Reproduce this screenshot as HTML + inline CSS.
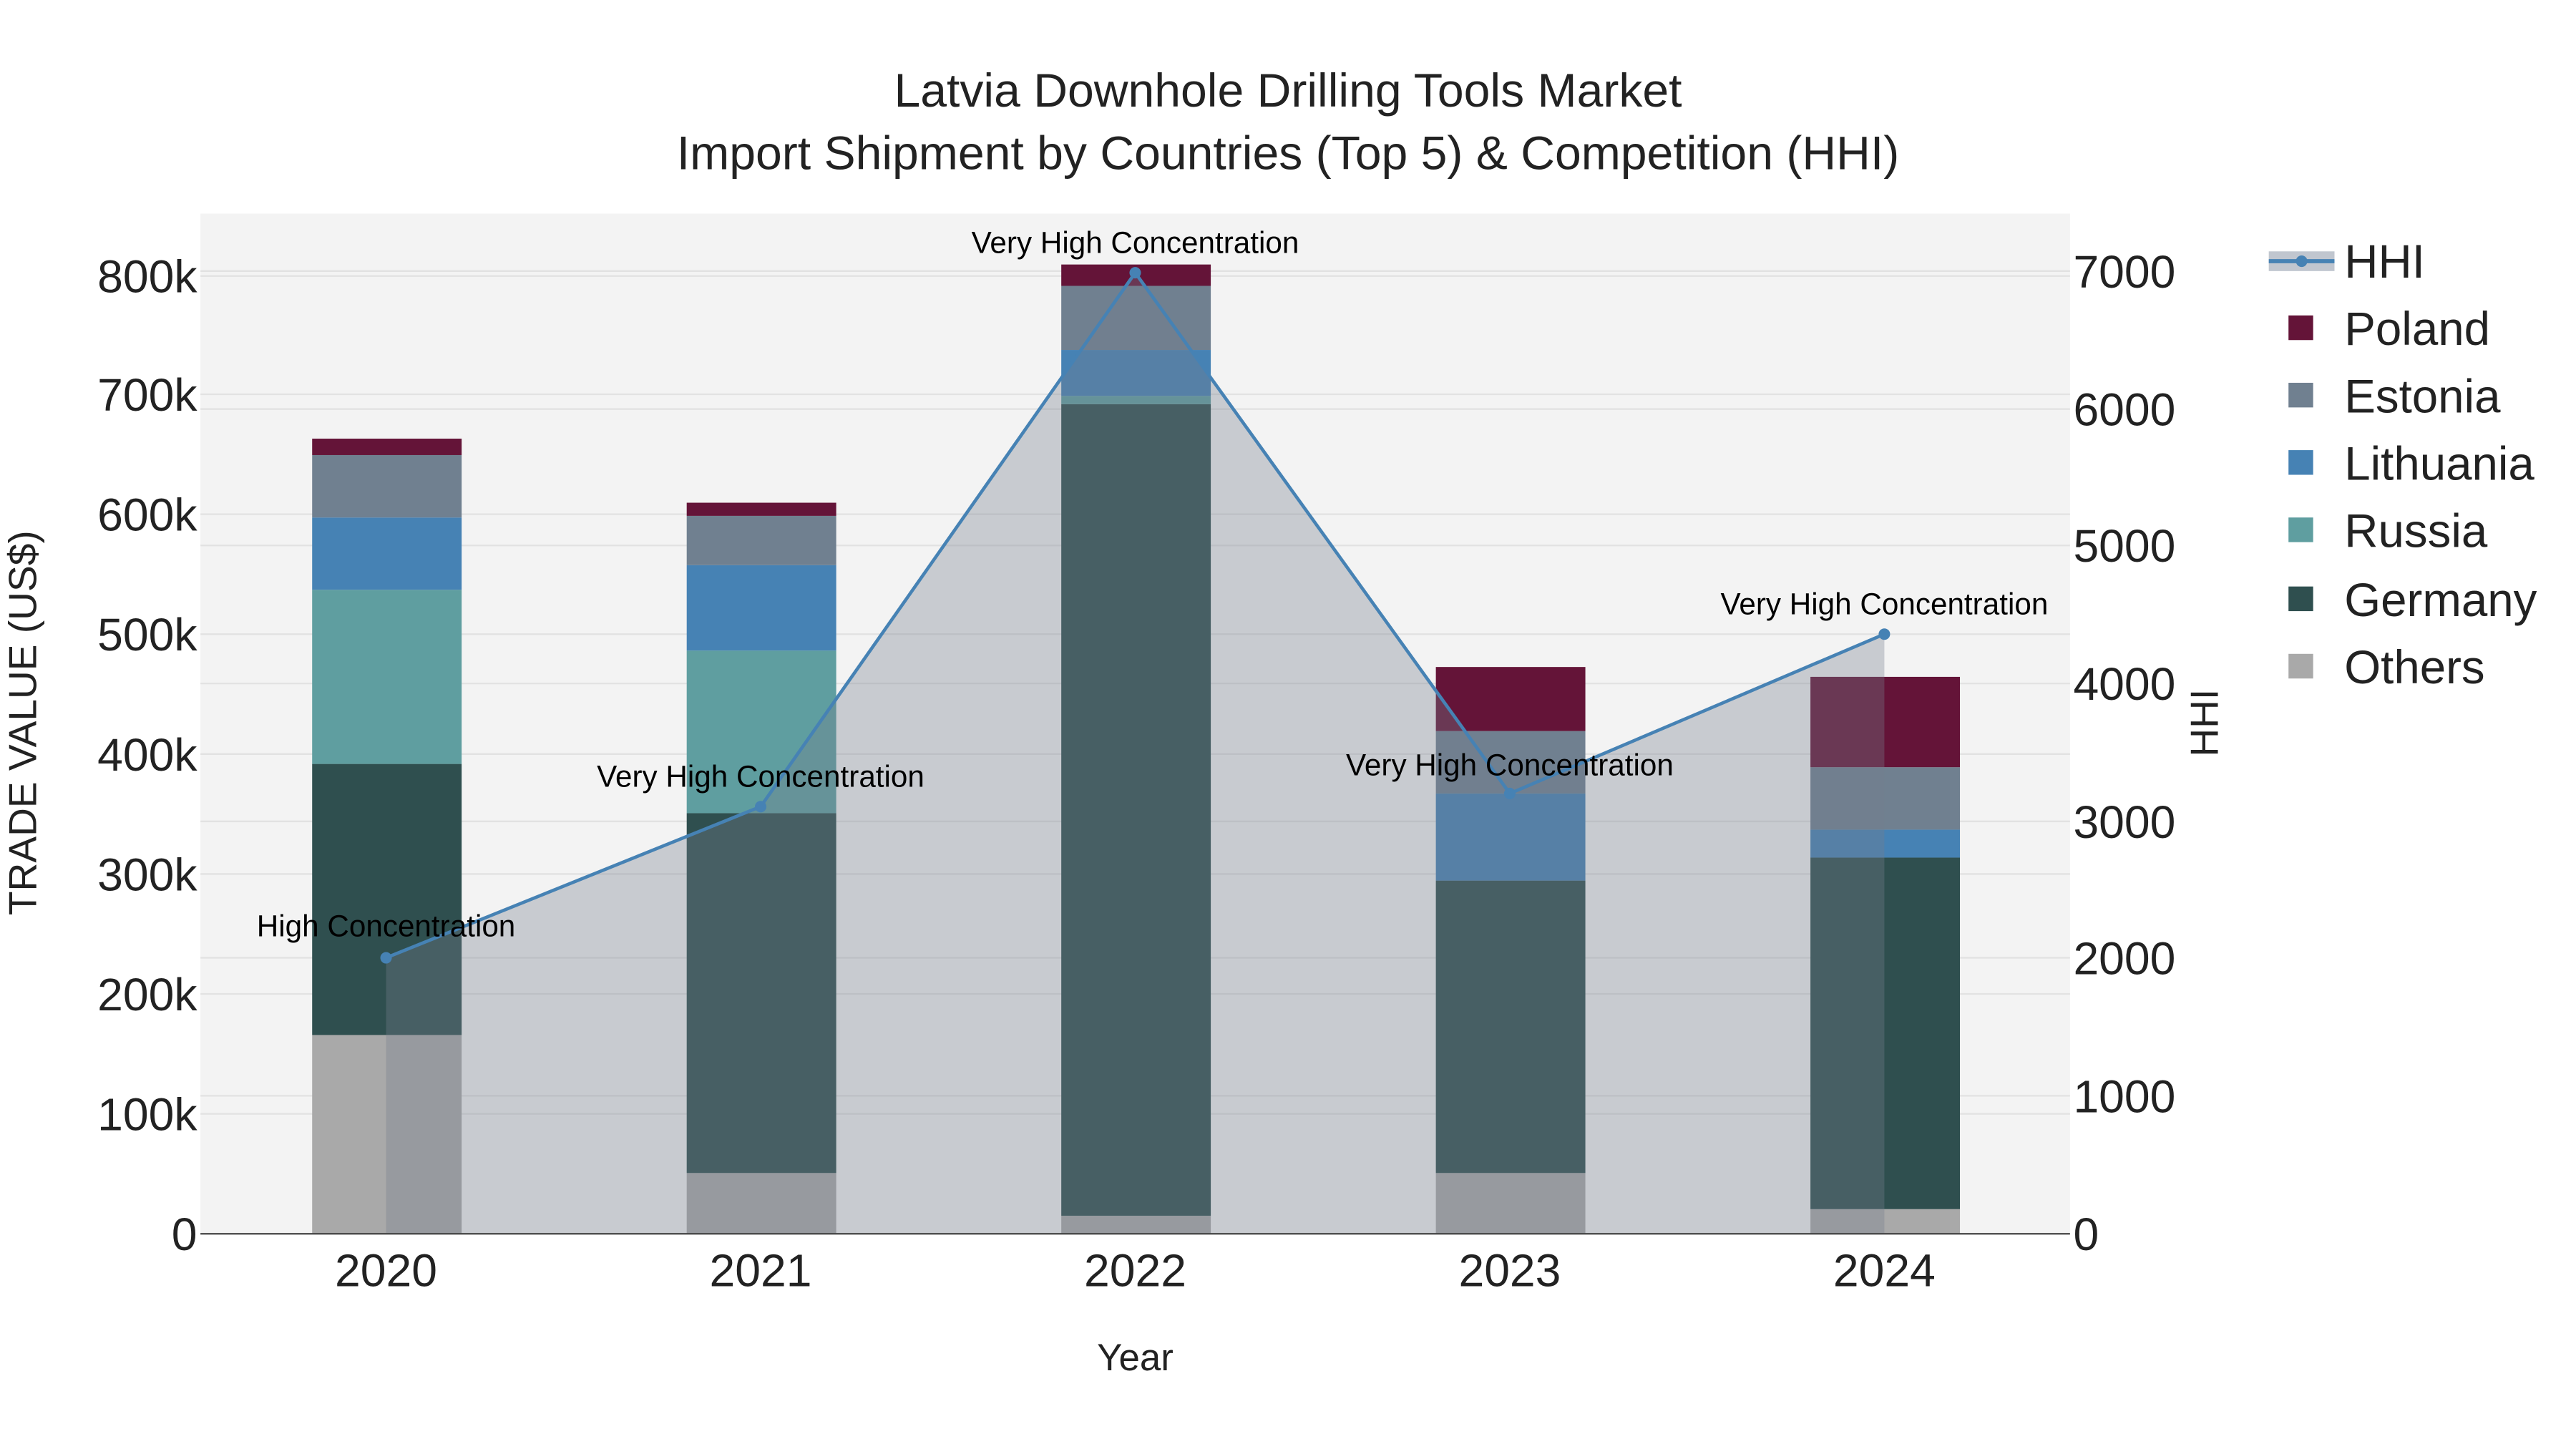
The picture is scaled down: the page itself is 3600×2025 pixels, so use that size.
<!DOCTYPE html>
<html><head><meta charset="utf-8"><style>
html,body{margin:0;padding:0;background:#fff;}
svg{display:block;font-family:"Liberation Sans",sans-serif;}
</style></head><body>
<svg width="3600" height="2025" viewBox="0 0 1568 882" xmlns="http://www.w3.org/2000/svg">
<rect width="1568" height="882" fill="#fff"/>
<rect x="122" y="130" width="1138" height="621" fill="#f3f3f3"/>
<g stroke="#e2e2e2" stroke-width="1">
<line x1="122" x2="1260" y1="678" y2="678"/><line x1="122" x2="1260" y1="605" y2="605"/>
<line x1="122" x2="1260" y1="532" y2="532"/><line x1="122" x2="1260" y1="459" y2="459"/>
<line x1="122" x2="1260" y1="386" y2="386"/><line x1="122" x2="1260" y1="313" y2="313"/>
<line x1="122" x2="1260" y1="240" y2="240"/><line x1="122" x2="1260" y1="168" y2="168"/>
<line x1="122" x2="1260" y1="667" y2="667"/><line x1="122" x2="1260" y1="583" y2="583"/>
<line x1="122" x2="1260" y1="500" y2="500"/><line x1="122" x2="1260" y1="416" y2="416"/>
<line x1="122" x2="1260" y1="332" y2="332"/><line x1="122" x2="1260" y1="249" y2="249"/>
<line x1="122" x2="1260" y1="165" y2="165"/>
</g>
<g>
<rect x="190" y="630" width="91" height="121" fill="#a9a9a9"/>
<rect x="190" y="465" width="91" height="165" fill="#2f4f4f"/>
<rect x="190" y="359" width="91" height="106" fill="#5f9ea0"/>
<rect x="190" y="315" width="91" height="44" fill="#4682b4"/>
<rect x="190" y="277" width="91" height="38" fill="#708090"/>
<rect x="190" y="267" width="91" height="10" fill="#641438"/>
<rect x="418" y="714" width="91" height="37" fill="#a9a9a9"/>
<rect x="418" y="495" width="91" height="219" fill="#2f4f4f"/>
<rect x="418" y="396" width="91" height="99" fill="#5f9ea0"/>
<rect x="418" y="344" width="91" height="52" fill="#4682b4"/>
<rect x="418" y="314" width="91" height="30" fill="#708090"/>
<rect x="418" y="306" width="91" height="8" fill="#641438"/>
<rect x="646" y="740" width="91" height="11" fill="#a9a9a9"/>
<rect x="646" y="246" width="91" height="494" fill="#2f4f4f"/>
<rect x="646" y="241" width="91" height="5" fill="#5f9ea0"/>
<rect x="646" y="213" width="91" height="28" fill="#4682b4"/>
<rect x="646" y="174" width="91" height="39" fill="#708090"/>
<rect x="646" y="161" width="91" height="13" fill="#641438"/>
<rect x="874" y="714" width="91" height="37" fill="#a9a9a9"/>
<rect x="874" y="536" width="91" height="178" fill="#2f4f4f"/>
<rect x="874" y="483" width="91" height="53" fill="#4682b4"/>
<rect x="874" y="445" width="91" height="38" fill="#708090"/>
<rect x="874" y="406" width="91" height="39" fill="#641438"/>
<rect x="1102" y="736" width="91" height="15" fill="#a9a9a9"/>
<rect x="1102" y="522" width="91" height="214" fill="#2f4f4f"/>
<rect x="1102" y="505" width="91" height="17" fill="#4682b4"/>
<rect x="1102" y="467" width="91" height="38" fill="#708090"/>
<rect x="1102" y="412" width="91" height="55" fill="#641438"/>
</g>
<polygon points="235,583 463,491 691,166 919,483 1147,386 1147,751 235,751" fill="rgba(117,126,142,0.34)"/>
<polyline points="235,583 463,491 691,166 919,483 1147,386" fill="none" stroke="#4682b4" stroke-width="2"/>
<g fill="#4682b4"><circle cx="235" cy="583" r="3.5"/><circle cx="463" cy="491" r="3.5"/><circle cx="691" cy="166" r="3.5"/><circle cx="919" cy="483" r="3.5"/><circle cx="1147" cy="386" r="3.5"/></g>
<line x1="122" x2="1260" y1="751" y2="751" stroke="#444" stroke-width="1"/>
<g font-size="18.4" text-anchor="middle" fill="#000">
<text x="235" y="570">High Concentration</text>
<text x="463" y="479">Very High Concentration</text>
<text x="691" y="154">Very High Concentration</text>
<text x="919" y="472">Very High Concentration</text>
<text x="1147" y="374">Very High Concentration</text>
</g>
<g text-anchor="middle" fill="#222" font-size="28.8">
<text x="784" y="65">Latvia Downhole Drilling Tools Market</text>
<text x="784" y="103">Import Shipment by Countries (Top 5) &amp; Competition (HHI)</text>
</g>
<g font-size="28" text-anchor="end" fill="#222">
<text x="120" y="761">0</text><text x="120" y="688">100k</text><text x="120" y="615">200k</text>
<text x="120" y="542">300k</text><text x="120" y="469">400k</text><text x="120" y="396">500k</text>
<text x="120" y="323">600k</text><text x="120" y="250">700k</text><text x="120" y="178">800k</text>
</g>
<g font-size="28" text-anchor="start" fill="#222">
<text x="1262" y="761">0</text><text x="1262" y="677">1000</text><text x="1262" y="593">2000</text>
<text x="1262" y="510">3000</text><text x="1262" y="426">4000</text><text x="1262" y="342">5000</text>
<text x="1262" y="259">6000</text><text x="1262" y="175">7000</text>
</g>
<g font-size="28" text-anchor="middle" fill="#222">
<text x="235" y="783">2020</text><text x="463" y="783">2021</text><text x="691" y="783">2022</text>
<text x="919" y="783">2023</text><text x="1147" y="783">2024</text>
</g>
<text x="691" y="834" font-size="23" text-anchor="middle" fill="#222">Year</text>
<text transform="translate(22,440) rotate(-90)" font-size="24" text-anchor="middle" fill="#222">TRADE VALUE (US$)</text>
<text transform="translate(1350,440) rotate(-90)" font-size="24" text-anchor="middle" fill="#222">HHI</text>
<g font-size="28.5" fill="#222">
<rect x="1381" y="153" width="40" height="12" fill="rgba(150,160,175,0.6)"/>
<line x1="1381" x2="1421" y1="159" y2="159" stroke="#4682b4" stroke-width="2.5"/>
<circle cx="1401" cy="159" r="3.5" fill="#4682b4"/>
<text x="1427" y="169">HHI</text>
<rect x="1393" y="192" width="15" height="15" fill="#641438"/><text x="1427" y="210">Poland</text>
<rect x="1393" y="233" width="15" height="15" fill="#708090"/><text x="1427" y="251">Estonia</text>
<rect x="1393" y="274" width="15" height="15" fill="#4682b4"/><text x="1427" y="292">Lithuania</text>
<rect x="1393" y="315" width="15" height="15" fill="#5f9ea0"/><text x="1427" y="333">Russia</text>
<rect x="1393" y="357" width="15" height="15" fill="#2f4f4f"/><text x="1427" y="375">Germany</text>
<rect x="1393" y="398" width="15" height="15" fill="#a9a9a9"/><text x="1427" y="416">Others</text>
</g>
</svg>
</body></html>
